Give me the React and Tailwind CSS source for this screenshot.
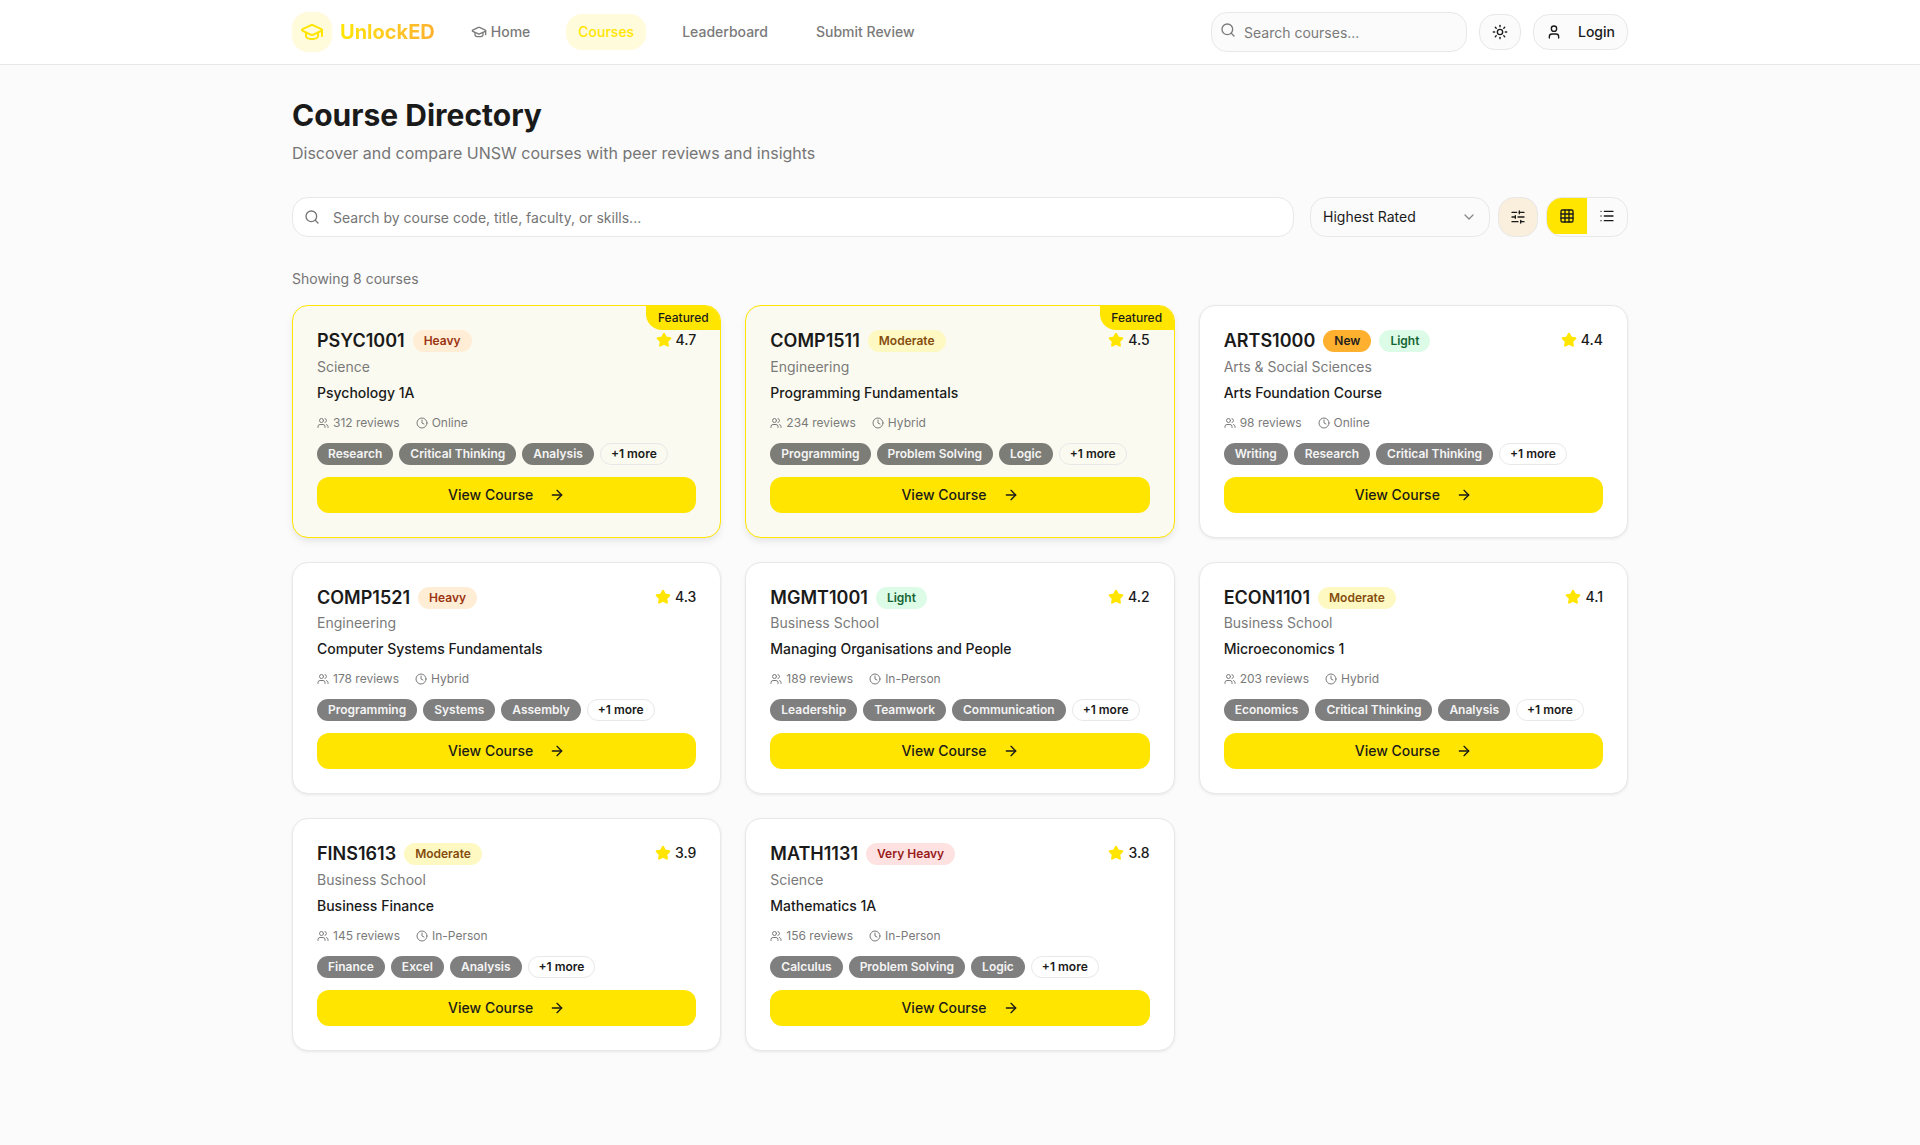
import React from "react";
import { GraduationCap, Sun, User, Search, ChevronDown, SlidersHorizontal, Grid3x3, List, Users, Clock, ArrowRight, Star } from "lucide-react";

const load = {
  Heavy: "bg-[#ffedd5] text-[#9a3412]",
  Moderate: "bg-[#fef9c3] text-[#854d0e]",
  Light: "bg-[#dcfce7] text-[#166534]",
  "Very Heavy": "bg-[#fee2e2] text-[#991b1b]",
};

const courses = [
  { code: "PSYC1001", load: "Heavy", rating: "4.7", faculty: "Science", title: "Psychology 1A", reviews: 312, mode: "Online", tags: ["Research", "Critical Thinking", "Analysis"], featured: true },
  { code: "COMP1511", load: "Moderate", rating: "4.5", faculty: "Engineering", title: "Programming Fundamentals", reviews: 234, mode: "Hybrid", tags: ["Programming", "Problem Solving", "Logic"], featured: true },
  { code: "ARTS1000", load: "Light", isNew: true, rating: "4.4", faculty: "Arts & Social Sciences", title: "Arts Foundation Course", reviews: 98, mode: "Online", tags: ["Writing", "Research", "Critical Thinking"] },
  { code: "COMP1521", load: "Heavy", rating: "4.3", faculty: "Engineering", title: "Computer Systems Fundamentals", reviews: 178, mode: "Hybrid", tags: ["Programming", "Systems", "Assembly"] },
  { code: "MGMT1001", load: "Light", rating: "4.2", faculty: "Business School", title: "Managing Organisations and People", reviews: 189, mode: "In-Person", tags: ["Leadership", "Teamwork", "Communication"] },
  { code: "ECON1101", load: "Moderate", rating: "4.1", faculty: "Business School", title: "Microeconomics 1", reviews: 203, mode: "Hybrid", tags: ["Economics", "Critical Thinking", "Analysis"] },
  { code: "FINS1613", load: "Moderate", rating: "3.9", faculty: "Business School", title: "Business Finance", reviews: 145, mode: "In-Person", tags: ["Finance", "Excel", "Analysis"] },
  { code: "MATH1131", load: "Very Heavy", rating: "3.8", faculty: "Science", title: "Mathematics 1A", reviews: 156, mode: "In-Person", tags: ["Calculus", "Problem Solving", "Logic"] },
];

function Badge({ className, children }) {
  return <span className={"inline-flex h-[22px] items-center rounded-full border border-transparent px-2.5 text-xs font-semibold " + className}>{children}</span>;
}

function Card({ c }) {
  return (
    <div className={"relative flex flex-col overflow-hidden rounded-2xl border px-6 pt-6 pb-6 " + (c.featured ? "border-[#ffe500] bg-[#fbfaf0] shadow-[0_4px_8px_-2px_rgba(0,0,0,0.12)]" : "border-[#e8e8e8] bg-white shadow-[0_1px_3px_rgba(0,0,0,0.08)]")}>
      {c.featured && (
        <div className="absolute top-0 right-0 flex h-6 w-[74px] items-center justify-center rounded-bl-2xl bg-[#ffe500] text-xs font-medium text-[#1a1a1a]">Featured</div>
      )}
      <div className="flex items-start justify-between">
        <div className="flex h-[26.5px] items-start gap-2">
          <span className="text-lg leading-[22px] font-semibold text-[#1a1a1a]">{c.code}</span>
          {c.isNew && <Badge className="bg-[#ffb02e] text-[#1f1f1f]">New</Badge>}
          <Badge className={load[c.load]}>{c.load}</Badge>
        </div>
        <div className="flex h-5 items-center gap-1">
          <Star size={16} className="fill-[#ffe500] text-[#ffe500]" />
          <span className="text-sm font-medium text-[#1a1a1a]">{c.rating}</span>
        </div>
      </div>
      <div className="text-sm text-[#7a7a7a]">{c.faculty}</div>
      <div className="mt-1.5 text-sm font-medium text-[#1a1a1a]">{c.title}</div>
      <div className="mt-3 flex items-center gap-4 text-xs text-[#7a7a7a]">
        <span className="flex items-center gap-1"><Users size={12} />{c.reviews} reviews</span>
        <span className="flex items-center gap-1"><Clock size={12} />{c.mode}</span>
      </div>
      <div className="mt-3 flex items-center gap-1.5">
        {c.tags.map((t) => (
          <span key={t} className="inline-flex h-[22px] items-center rounded-full border border-transparent bg-black/50 px-2.5 text-xs font-semibold text-[#f4f4f4]">{t}</span>
        ))}
        <span className="inline-flex h-[22px] items-center rounded-full border border-[#e8e8e8] px-2.5 text-xs font-semibold text-[#1a1a1a]">+1 more</span>
      </div>
      <button className="mt-3 flex h-9 items-center justify-center gap-4 rounded-xl bg-[#ffe500] text-sm font-medium text-[#1a1a1a]">
        View Course
        <ArrowRight size={16} />
      </button>
    </div>
  );
}

export default function App() {
  return (
    <div className="min-h-[1145px] bg-[#fbfbfb] font-['Inter',sans-serif]">
      <header className="border-b border-[#e8e8e8] bg-white">
        <div className="mx-auto flex h-16 max-w-[1400px] items-center justify-between px-8">
          <div className="flex items-center">
            <div className="flex items-center gap-2">
              <div className="flex size-10 items-center justify-center rounded-2xl bg-[#fffbdb]">
                <GraduationCap size={24} className="text-[#ffe500]" />
              </div>
              <span className="bg-gradient-to-r from-[#ffe500] to-[#ffb02e] bg-clip-text text-xl font-bold text-transparent">UnlockED</span>
            </div>
            <nav className="ml-6 flex items-center gap-6 text-sm font-medium text-[#7a7a7a]">
              <a className="flex h-9 items-center gap-1 rounded-2xl px-3"><GraduationCap size={16} />Home</a>
              <a className="flex h-9 items-center rounded-2xl bg-[#fffbdb] px-3 text-[#ffe500]">Courses</a>
              <a className="flex h-9 items-center rounded-2xl px-3">Leaderboard</a>
              <a className="flex h-9 items-center rounded-2xl px-3">Submit Review</a>
            </nav>
          </div>
          <div className="flex items-center gap-3">
            <div className="flex h-10 w-64 items-center gap-2 rounded-2xl border border-[#e8e8e8] bg-[#fbfbfb] pr-2.5 pb-1 pl-2">
              <Search size={16} className="text-[#7a7a7a]" />
              <span className="mt-1.5 text-sm text-[#7a7a7a]">Search courses...</span>
            </div>
            <button className="flex h-9 w-[42px] items-center justify-center rounded-2xl border border-[#e8e8e8] bg-[#fbfbfb] text-[#1a1a1a]"><Sun size={16} /></button>
            <button className="flex h-9 w-[95px] items-center gap-4 rounded-2xl border border-[#e8e8e8] bg-[#fbfbfb] pl-3 text-sm font-medium text-[#1a1a1a]"><User size={16} />Login</button>
          </div>
        </div>
      </header>
      <main className="mx-auto max-w-[1400px] px-8 pt-8">
        <h1 className="text-3xl leading-9 font-bold text-[#1a1a1a]">Course Directory</h1>
        <p className="mt-2 text-base text-[#757575]">Discover and compare UNSW courses with peer reviews and insights</p>
        <div className="mt-8 flex items-center gap-2">
          <div className="mr-2 flex h-10 flex-1 items-center gap-[13px] rounded-2xl border border-[#e8e8e8] bg-white pr-3 pl-[11px]">
            <Search size={16} className="text-[#757575]" />
            <span className="mt-0.5 text-sm text-[#757575]">Search by course code, title, faculty, or skills...</span>
          </div>
          <div className="flex h-10 w-[180px] items-center justify-between rounded-2xl border border-[#e8e8e8] bg-[#fbfbfb] px-3 text-sm text-[#1a1a1a]">
            Highest Rated
            <ChevronDown size={16} className="text-[#8a8a8a]" />
          </div>
          <button className="flex size-10 items-center justify-center rounded-2xl border border-[#e8e8e8] bg-[#f9efdc] text-[#1a1a1a]"><SlidersHorizontal size={16} /></button>
          <div className="flex h-10 w-[82px] items-start overflow-hidden rounded-2xl border border-[#e8e8e8] bg-[#fbfbfb]">
            <button className="flex h-9 w-10 items-center justify-center bg-[#ffe500] text-[#1a1a1a]"><Grid3x3 size={16} /></button>
            <button className="flex h-9 w-10 items-center justify-center text-[#1a1a1a]"><List size={16} /></button>
          </div>
        </div>
        <p className="mt-8 text-sm text-[#757575]">Showing 8 courses</p>
        <div className="mt-4 grid grid-cols-3 gap-6">
          {courses.map((c) => <Card key={c.code} c={c} />)}
        </div>
      </main>
    </div>
  );
}
